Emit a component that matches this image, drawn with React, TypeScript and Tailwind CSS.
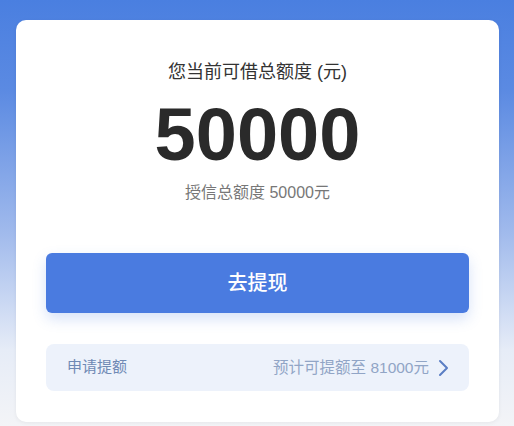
export default function App() {
  const font = { fontFamily: '"Liberation Sans", "Noto Sans CJK SC", sans-serif' };
  return (
    <div
      className="h-[426px] w-[514px] overflow-hidden bg-[linear-gradient(180deg,#4a7fe0_0px,#5b8ae2_90px,#9fb9ec_230px,#e6ecf7_350px,#f3f4f7_426px)] pl-[16px] pt-[20px]"
      style={font}
    >
      <div className="flex h-[402px] w-[483px] flex-col items-center rounded-[10px] bg-white px-[30px] pt-[42px] shadow-[0_1px_4px_rgba(0,0,0,0.06)]">
        <div className="text-[18px] leading-[20px] text-[#333]">您当前可借总额度 (元)</div>
        <div className="mt-[16px] text-[74px] font-bold leading-[74px] text-[#2a2a2a]">50000</div>
        <div className="mt-[11px] text-[16px] leading-[20px] text-[#777]">授信总额度 50000元</div>
        <button className="mt-[50px] flex h-[60px] w-full items-center justify-center rounded-[6px] bg-[#4a7be0] text-[20px] font-medium text-white shadow-[0_6px_14px_rgba(74,123,224,0.22)]">
          去提现
        </button>
        <div className="mt-[31px] flex h-[47px] w-full items-center justify-between rounded-[8px] bg-[#edf2fb] pl-[21px] pr-[19px]">
          <span className="text-[15px] text-[#6f89b4]">申请提额</span>
          <span className="flex items-center gap-[7px] text-[15.5px] text-[#91a5c6]">
            预计可提额至 81000元
            <svg width="14" height="18" viewBox="0 0 14 18" fill="none">
              <path d="M4 2l7 7-7 7" stroke="#5b7ec4" strokeWidth="2" strokeLinecap="round" strokeLinejoin="round" />
            </svg>
          </span>
        </div>
      </div>
    </div>
  );
}
